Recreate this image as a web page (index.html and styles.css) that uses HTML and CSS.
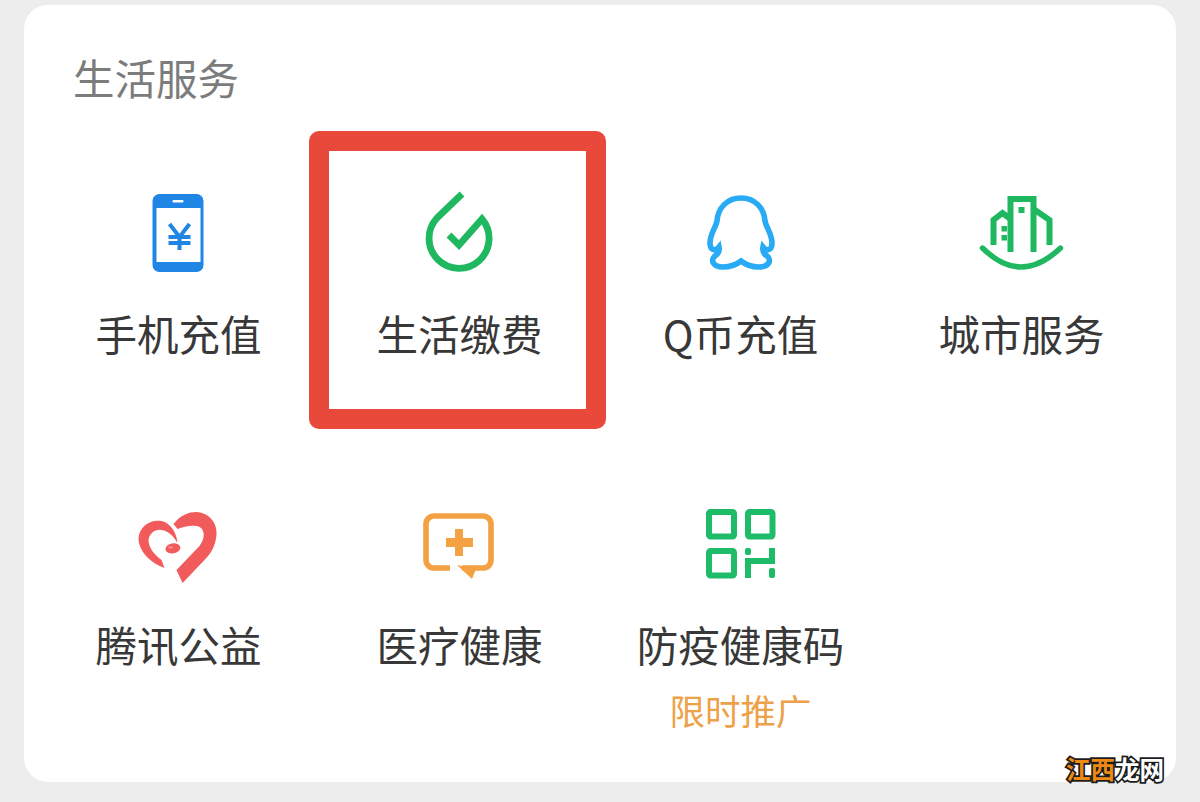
FILE: index.html
```html
<!DOCTYPE html>
<html lang="zh-CN">
<head>
    <meta charset="UTF-8">
    <title>生活服务</title>
    <link rel="stylesheet" href="styles.css">
</head>
<body>
    <div class="card">
        <h3 class="title">生活服务</h3>
        <div class="grid">
            <div class="item">
                <svg class="icon" viewBox="-1.5 0 100 100">
                    <rect x="22" y="14" width="51" height="78" rx="7" fill="#1f86e6"/>
                    <rect x="26" y="28" width="44" height="54" fill="#fff"/>
                    <rect x="42" y="20" width="11" height="2.6" rx="1.3" fill="#fff"/>
                    <path d="M39 44 L49 57 L59 44 M49 57 V70 M38 57 H60 M38 63 H60" fill="none" stroke="#1f86e6" stroke-width="4"/>
                </svg>
                <div class="label">手机充值</div>
            </div>
            <div class="item">
                <svg class="icon" viewBox="-1 0 100 100">
                    <path d="M51 14 L26 38 A30 30 0 1 0 71 39 L48 65 L38 55" fill="none" stroke="#1fb860" stroke-width="6.8"/>
                </svg>
                <div class="label">生活缴费</div>
            </div>
            <div class="item">
                <svg class="icon" viewBox="0 0 100 100">
                    <path d="M50 18 C64 18 73 28 74 41 C75 47 81 54 81 63 C81 70 76 72 72 67 C71 72 73 74 76 76 C81 80 78 87 68 87 C60 87 55 85 50 81 C45 85 40 87 32 87 C22 87 19 80 24 76 C27 74 29 72 28 67 C24 72 19 70 19 63 C19 54 25 47 26 41 C27 28 36 18 50 18 Z" fill="none" stroke="#29aaf4" stroke-width="5.6"/>
                </svg>
                <div class="label">Q币充值</div>
            </div>
            <div class="item">
                <svg class="icon" viewBox="1.5 0 100 100">
                    <path d="M12 68 Q50 106 90 68" fill="none" stroke="#1fb860" stroke-width="5.4" stroke-linecap="round"/>
                    <path d="M40 72 V19 H63 V72 M63 29 L79 40 V65 M23 65 V40 L32 33 L40 39" fill="none" stroke="#1fb860" stroke-width="6"/>
                    <rect x="31" y="46" width="5.5" height="5.5" fill="#1fb860"/>
                    <rect x="31" y="55" width="5.5" height="5.5" fill="#1fb860"/>
                    <rect x="48" y="27" width="6" height="6" fill="#1fb860"/>
                </svg>
                <div class="label">城市服务</div>
            </div>
            <div class="item">
                <svg class="icon" viewBox="-1.5 -9 100 100">
                    <path d="M52 83 L46 70 L69 46 C76 37 74 27 66 26 C59 25 53 27 47 29 L43 24 C50 15 58 12 66 12 C79 13 87 23 86 35 C85 45 81 53 74 60 Z" fill="#f25b5b"/>
                    <path d="M47 43 C46 32 40 23 31 21 C20 19 9 26 8 38 C8 50 18 62 34 68 L31 60 C23 54 18 47 18 40 C19 33 25 29 31 30 C38 31 43 36 47 43 Z" fill="#f25b5b"/>
                    <ellipse cx="42.5" cy="48.5" rx="7.5" ry="5" transform="rotate(-10 42 49)" fill="#f25b5b"/>
                    <ellipse cx="40" cy="47.5" rx="2.4" ry="1.1" fill="#f99"/>
                </svg>
                <div class="label">腾讯公益</div>
            </div>
            <div class="item">
                <svg class="icon" viewBox="0 -9 100 100">
                    <path d="M40 68 H24 A8 8 0 0 1 16 60 V24 A8 8 0 0 1 24 16 H73 A8 8 0 0 1 81 24 V60 A8 8 0 0 1 73 68 H52" fill="none" stroke="#f4a143" stroke-width="5.6"/>
                    <path d="M47 65 L66 69 L62 79 Z" fill="#f4a143"/>
                    <path d="M45 29 H53 V38 H63 V47 H53 V56 H45 V47 H36 V38 H45 Z" fill="#f4a143"/>
                </svg>
                <div class="label">医疗健康</div>
            </div>
            <div class="item">
                <svg class="icon" viewBox="0 -9 100 100">
                    <rect x="18" y="12" width="25" height="24.5" rx="1.5" fill="none" stroke="#1ebb69" stroke-width="6"/>
                    <rect x="57" y="12" width="24.5" height="24.5" rx="1.5" fill="none" stroke="#1ebb69" stroke-width="6"/>
                    <rect x="18" y="51" width="25" height="24.5" rx="1.5" fill="none" stroke="#1ebb69" stroke-width="6"/>
                    <rect x="54" y="48" width="6" height="7" rx="2" fill="#1ebb69"/>
                    <path d="M57 78 V61 H81 V48" fill="none" stroke="#1ebb69" stroke-width="6"/>
                    <rect x="78" y="68" width="6" height="10" rx="2" fill="#1ebb69"/>
                </svg>
                <div class="label">防疫健康码</div>
                <div class="sub-label">限时推广</div>
            </div>
        </div>
        <!-- red marker around the second item -->
        <div class="highlight"></div>
    </div>
    <div class="watermark"><span class="mark-orange">江西</span>龙网</div>
</body>
</html>
```

FILE: styles.css
```css
html, body { margin: 0; height: 802px; overflow: hidden; }
body { position: relative; background-color: #ededed; font-family: "Noto Sans CJK SC", "Noto Sans", sans-serif; }
.card { position: relative; box-sizing: border-box; height: 777px; margin: 0 24px; top: 5px; padding: 42px 14px 0; background-color: #fff; border-radius: 24px; }
.title { margin: 0 0 1px 35px; font-size: 41.5px; font-weight: 400; line-height: 60px; color: #7c7c7c; }
.grid { display: grid; grid-template-columns: repeat(4, 281px); grid-auto-rows: 311px; }
.item { display: flex; flex-direction: column; align-items: center; padding-top: 72px; }
.icon { display: block; flex: none; width: 100px; height: 100px; }
.label { margin-top: 27px; font-size: 41.5px; line-height: 52px; color: #383838; white-space: nowrap; }
.sub-label { margin-top: 15px; font-size: 35.5px; line-height: 50px; color: #eda148; white-space: nowrap; }
.highlight { position: absolute; left: 285px; top: 126px; box-sizing: border-box; width: 297px; height: 298px; border: 20px solid #e8493a; border-radius: 10px; }
.watermark { position: absolute; left: 1066px; top: 753px; font-size: 24.5px; font-weight: 700; line-height: 32px; color: #fff; -webkit-text-stroke: 3.5px #1c1c1c; paint-order: stroke fill; white-space: nowrap; }
.mark-orange { color: #ee8a12; }
```
